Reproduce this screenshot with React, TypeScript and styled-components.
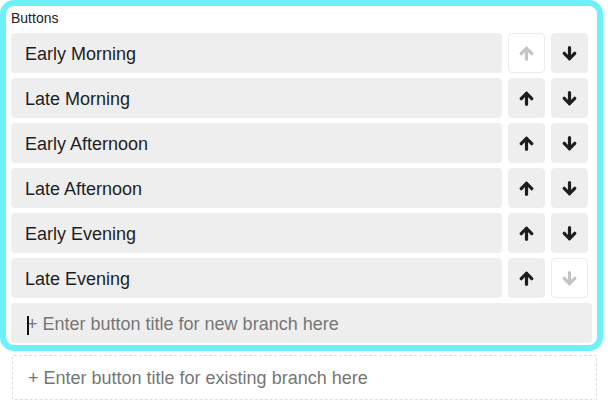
import React from "react";
import styled, { createGlobalStyle } from "styled-components";

const Global = createGlobalStyle`
  html, body { margin: 0; padding: 0; background: #fff; }
  body { font-family: "Liberation Sans", Arial, Helvetica, sans-serif; }
  * { box-sizing: border-box; }
`;

const Page = styled.div`
  width: 614px;
`;

const Group = styled.div`
  width: 603px;
  border: 6px solid #6cf1f9;
  border-radius: 14px;
  padding: 0 5px 2px 5px;
  display: flex;
  flex-direction: column;
`;

const Label = styled.div`
  font-size: 14px;
  color: #222;
  height: 27px;
  line-height: 25px;
`;

const List = styled.div`
  display: flex;
  flex-direction: column;
  gap: 5px;
  margin-right: 4px;
`;

const Row = styled.div`
  display: flex;
  gap: 6px;
  height: 40px;
`;

const Title = styled.div`
  flex: 1;
  background: #eeeeee;
  border-radius: 4px;
  display: flex;
  align-items: center;
  padding: 2px 0 0 14px;
  font-size: 18px;
  color: #1e1e1e;
`;

const MoveButton = styled.button<{ $disabled?: boolean }>`
  width: 37px;
  height: 40px;
  border-radius: 4px;
  border: 1px solid ${(p) => (p.$disabled ? "#ececec" : "#eeeeee")};
  background: ${(p) => (p.$disabled ? "#ffffff" : "#eeeeee")};
  color: ${(p) => (p.$disabled ? "#c4c4c4" : "#1e1e1e")};
  display: flex;
  align-items: center;
  justify-content: center;
  padding: 0;
  cursor: ${(p) => (p.$disabled ? "default" : "pointer")};
`;

const InputWrap = styled.div`
  position: relative;
  margin-top: 5px;
`;

const Caret = styled.span`
  position: absolute;
  left: 16px;
  top: 13px;
  width: 1.5px;
  height: 19px;
  background: #111;
`;

const NewInput = styled.input`
  display: block;
  height: 40px;
  width: 100%;
  border: none;
  outline: none;
  background: #eeeeee;
  border-radius: 4px;
  padding: 3px 0 0 16px;
  font-family: "Liberation Sans", Arial, Helvetica, sans-serif;
  font-size: 18px;
  color: #222;
  &::placeholder { color: #767676; }
`;

const ExistingInput = styled.input`
  display: block;
  margin: 4px 0 0 12px;
  width: 585px;
  height: 45px;
  border: 1px dashed #dcdcdc;
  border-radius: 2px;
  outline: none;
  background: #fff;
  padding: 2px 0 0 15px;
  font-family: "Liberation Sans", Arial, Helvetica, sans-serif;
  font-size: 18px;
  color: #222;
  &::placeholder { color: #767676; }
`;

const Arrow = ({ down }: { down?: boolean }) => (
  <svg
    width="15"
    height="15"
    viewBox="0 0 16 16"
    style={{ transform: down ? "rotate(180deg)" : undefined }}
    fill="none"
    stroke="currentColor"
    strokeWidth="3.4"
    strokeLinecap="round"
    strokeLinejoin="round"
  >
    <path d="M8 14.2V2.6" />
    <path d="M2.4 8.2L8 2.4l5.6 5.8" />
  </svg>
);

const items = [
  "Early Morning",
  "Late Morning",
  "Early Afternoon",
  "Late Afternoon",
  "Early Evening",
  "Late Evening",
];

export default function App() {
  return (
    <Page>
      <Global />
      <Group>
        <Label>Buttons</Label>
        <List>
          {items.map((t, i) => (
            <Row key={t}>
              <Title>{t}</Title>
              <MoveButton $disabled={i === 0} aria-label="Move up">
                <Arrow />
              </MoveButton>
              <MoveButton $disabled={i === items.length - 1} aria-label="Move down">
                <Arrow down />
              </MoveButton>
            </Row>
          ))}
        </List>
        <InputWrap>
          <NewInput placeholder="+ Enter button title for new branch here" />
          <Caret />
        </InputWrap>
      </Group>
      <ExistingInput placeholder="+ Enter button title for existing branch here" />
    </Page>
  );
}
